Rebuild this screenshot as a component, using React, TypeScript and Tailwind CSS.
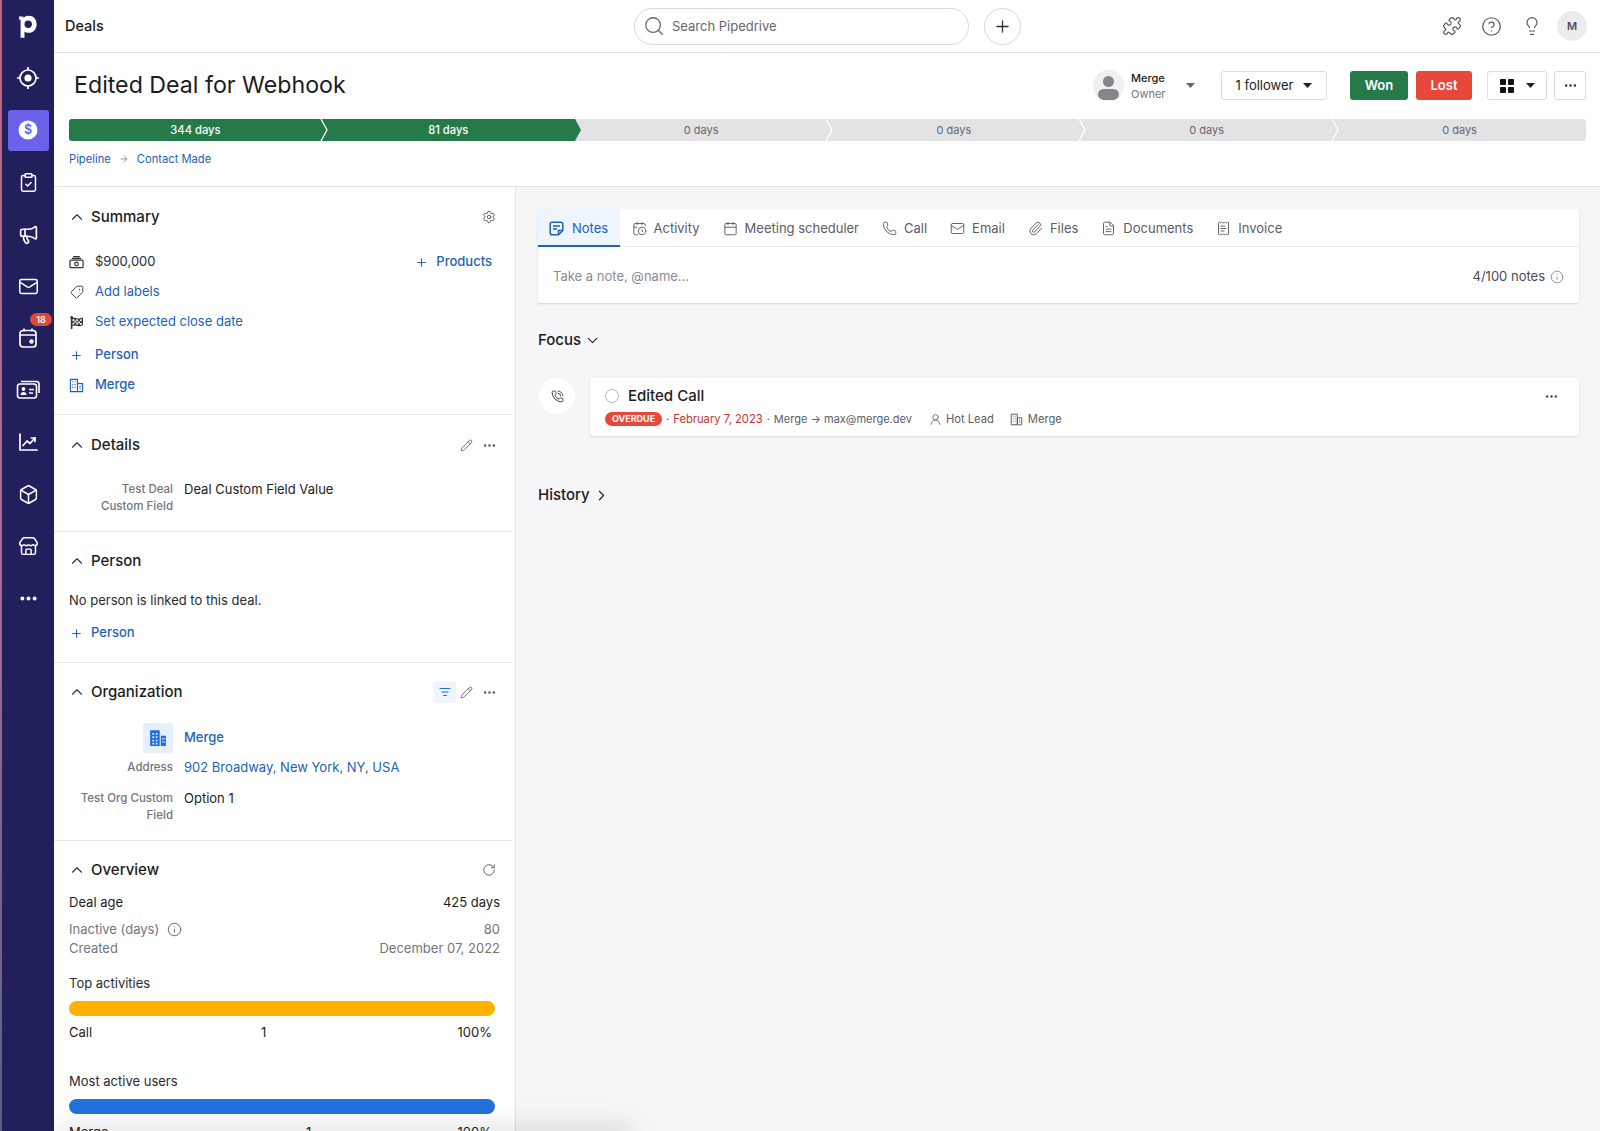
import React from "react";
import {
  ArrowRight,
  Box,
  Calendar,
  CalendarClock,
  ChevronDown,
  ChevronRight,
  ChevronUp,
  CircleHelp,
  ClipboardCheck,
  Ellipsis,
  FileText,
  Info,
  Lightbulb,
  ListFilter,
  Mail,
  Megaphone,
  Paperclip,
  Pencil,
  Phone,
  PhoneCall,
  Plus,
  Puzzle,
  ReceiptText,
  RotateCw,
  Search,
  Settings,
  Store,
  Tag,
  UserRound,
} from "lucide-react";
import { FaFlagCheckered } from "react-icons/fa";

const Logo = () => (
  <svg width="20" height="26" viewBox="0 0 20 26" fill="none">
    <path
      d="M1 3.500h4.200l.4 1.600C6.700 3.600 8.400 2.800 10.600 2.800c4.700 0 8 3.400 8 8.400s-3.300 8.600-8 8.600c-1.700 0-3.100-.5-4.100-1.400v6.400H2.600V7.400c0-.6-.3-.8-.8-.8H1V3.500z"
      fill="#fff"
    />
    <circle cx="10.200" cy="11.200" r="3.700" fill="#211f5c" />
  </svg>
);

const Target = () => (
  <svg width="24" height="24" viewBox="0 0 24 24" fill="none" stroke="#fff" strokeWidth="1.700">
    <circle cx="12" cy="12" r="8" />
    <circle cx="12" cy="12" r="3.600" fill="#fff" stroke="none" />
    <path d="M12 1v3M12 20v3M1 12h3M20 12h3" />
  </svg>
);

const DollarCircle = () => (
  <svg width="20" height="20" viewBox="0 0 20 20">
    <circle cx="10" cy="10" r="9.500" fill="#fff" />
    <text x="10" y="14.400" textAnchor="middle" fontSize="12.500" fontWeight="600" fill="#6a62e8" fontFamily="Inter, sans-serif">
      $
    </text>
  </svg>
);

const CalendarDot = () => (
  <svg width="20" height="22" viewBox="0 0 20 22" fill="none" stroke="#fff" strokeWidth="1.700">
    <rect x="2" y="3.500" width="16" height="16.500" rx="3" />
    <path d="M2 8h16M6 1.500v3M14 1.500v3" />
    <circle cx="13.500" cy="14.500" r="2.200" fill="#fff" stroke="none" />
  </svg>
);

const ContactsIcon = () => (
  <svg width="24" height="22" viewBox="0 0 24 22" fill="none" stroke="#fff" strokeWidth="1.600">
    <rect x="1.500" y="5" width="19" height="14" rx="2.500" />
    <path d="M5 2.500h15.500a2.500 2.500 0 0 1 2.500 2.500v9" />
    <circle cx="7.500" cy="10" r="1.900" fill="#fff" stroke="none" />
    <path d="M4.500 16c0-2 1.300-3 3-3s3 1 3 3z" fill="#fff" stroke="none" />
    <path d="M13 10.500h5M13 14h4" />
  </svg>
);

const ChartIcon = () => (
  <svg width="21" height="20" viewBox="0 0 21 20" fill="none" stroke="#fff" strokeWidth="1.700" strokeLinecap="round" strokeLinejoin="round">
    <path d="M2 2v16h17" />
    <path d="M5 13.500l4-4.500 3 2.500 5-5.500" />
    <path d="M13.500 6H17v3.500" />
  </svg>
);

const GridIcon = () => (
  <svg width="14" height="14" viewBox="0 0 14 14" fill="#111">
    <rect width="6" height="6" rx="1" />
    <rect x="8" width="6" height="6" rx="1" />
    <rect y="8" width="6" height="6" rx="1" />
    <rect x="8" y="8" width="6" height="6" rx="1" />
  </svg>
);

const MoneyIcon = () => (
  <svg width="16" height="14" viewBox="0 0 16 14" fill="none" stroke="#333" strokeWidth="1.300">
    <rect x="1" y="5" width="14" height="8" rx="1" />
    <circle cx="8" cy="9" r="1.900" />
    <path d="M3 3.200h10M4.500 1.200h7" />
  </svg>
);

const NoteIcon = () => (
  <svg width="15" height="15" viewBox="0 0 15 15" fill="none" stroke="#1d62b5" strokeWidth="1.500">
    <path d="M3 1.200h9A1.800 1.800 0 0 1 13.800 3v6.500l-4.300 4.300H3A1.800 1.800 0 0 1 1.200 12V3A1.800 1.800 0 0 1 3 1.200z" />
    <path d="M4 5h7M4 8h4" />
    <path d="M9.500 13.500V9.500h4" />
  </svg>
);

// office block with a lower wing, used in blue and grey
const BuildingIcon = ({ size = 15, solid = false, stroke = "currentColor" }: { size?: number; solid?: boolean; stroke?: string }) =>
  solid ? (
    <svg width={size} height={size} viewBox="0 0 16 16" fill={stroke}>
      <path d="M1 1h8.500v14H1zM10.500 6H15v9h-4.500z" />
      <path d="M3 3.500h1.500V5H3zM6 3.500h1.500V5H6zM3 6.500h1.500V8H3zM6 6.500h1.500V8H6zM3 9.500h1.500V11H3zM6 9.500h1.500V11H6zM3 12.300h1.500v1.500H3zM6 12.300h1.500v1.500H6zM11.700 8.200H14v1.100h-2.300zM11.700 11h2.300v1.100h-2.300z" fill="#e6f0fc" />
    </svg>
  ) : (
    <svg width={size} height={size} viewBox="0 0 16 16" fill="none" stroke={stroke} strokeWidth="1.200">
      <path d="M1.500 1.500h7.500v13H1.500zM9 6h5.500v8.500H9z" />
      <path d="M3.500 4h1M6 4h1M3.500 7h1M6 7h1M3.500 10h1M6 10h1M11 9h1.500M11 11.500h1.500" />
    </svg>
  );

const Caret = ({ color = "#222" }: { color?: string }) => (
  <svg width="9" height="5" viewBox="0 0 9 5" fill={color}>
    <path d="M0 0h9L4.500 5z" />
  </svg>
);

const navItems = [
  <Target />,
  <DollarCircle />,
  <ClipboardCheck size={21} strokeWidth={1.7} />,
  <Megaphone size={21} strokeWidth={1.9} />,
  <Mail size={21} strokeWidth={1.7} />,
  <CalendarDot />,
  <ContactsIcon />,
  <ChartIcon />,
  <Box size={21} strokeWidth={1.7} />,
  <Store size={21} strokeWidth={1.7} />,
  <Ellipsis size={21} strokeWidth={2.6} />,
];

const Sidebar = () => (
  <div className="w-[54px] h-full shrink-0 flex bg-[#211f5c]">
    <div className="w-[2px] h-full bg-gradient-to-b from-[#c2607c] via-[#a66a92] to-[#56607e]" />
    <div className="flex-1 flex flex-col items-center text-white">
      <div className="h-[52px] flex items-center justify-center">
        <Logo />
      </div>
      {navItems.map((icon, i) => (
        <div key={i} className="relative h-[52px] w-full flex items-center justify-center">
          {i === 1 ? (
            <div className="w-[41px] h-[41px] rounded-[3px] bg-[#6a62e8] flex items-center justify-center">{icon}</div>
          ) : (
            icon
          )}
          {i === 5 && (
            <span className="absolute left-[28px] top-[1px] h-[13px] w-[22px] rounded-full bg-[#e2483a] text-white text-[9px] font-semibold leading-[13px] text-center">
              18
            </span>
          )}
        </div>
      ))}
    </div>
  </div>
);

const TopBar = () => (
  <div className="h-[53px] shrink-0 border-b border-[#e3e3e6] flex items-center pl-[11px] pr-[13px]">
    <div className="w-[569px] text-[14.500px] font-medium text-[#1c1c21]">Deals</div>
    <div className="h-[37px] w-[335px] rounded-full border border-[#d9d6dd] flex items-center pl-[8px] text-[#66666e]">
      <Search size={22} strokeWidth={1.4} />
      <span className="ml-[7px] mt-[1px] text-[13px]">Search Pipedrive</span>
    </div>
    <div className="ml-[15px] h-[37px] w-[37px] rounded-full border border-[#d9d6dd] flex items-center justify-center text-[#2c2c33]">
      <Plus size={19} strokeWidth={1.6} />
    </div>
    <div className="ml-auto flex items-center text-[#55555d]">
      <Puzzle size={20} strokeWidth={1.4} />
      <CircleHelp size={21} strokeWidth={1.4} className="ml-[19px]" />
      <Lightbulb size={20} strokeWidth={1.4} className="ml-[20px]" />
      <div className="ml-[15px] h-[30px] w-[30px] rounded-full bg-[#ececef] flex items-center justify-center text-[11px] font-semibold text-[#4b4b53]">
        M
      </div>
    </div>
  </div>
);

const stages = [
  { label: "344 days", done: true },
  { label: "81 days", done: true },
  { label: "0 days", done: false },
  { label: "0 days", done: false },
  { label: "0 days", done: false },
  { label: "0 days", done: false },
];

const PipelineBar = () => (
  <div className="flex h-[22px]">
    {stages.map((s, i) => (
      <div
        key={i}
        className={
          "relative flex-1 flex items-center justify-center " +
          (s.done ? "bg-[#267a4a] text-white font-medium text-[11.200px] pt-[1px] " : "bg-[#e3e2e5] text-[#66666e] text-[11px] ") +
          (i === 0 ? "rounded-l-[3px] " : "") +
          (i === 5 ? "rounded-r-[3px]" : "")
        }
      >
        {s.label}
        {i === 1 && (
          <svg width="6" height="22" viewBox="0 0 6 22" className="absolute left-full top-0 z-10">
            <path d="M0 0l6 11-6 11z" fill="#267a4a" />
          </svg>
        )}
        {i < 5 && i !== 1 && (
          <svg width="8" height="22" viewBox="0 0 8 22" fill="none" className="absolute right-[-6px] top-0 z-10">
            <path d="M1 0l6 11-6 11" stroke="#fff" strokeWidth="1.300" />
          </svg>
        )}
      </div>
    ))}
  </div>
);

const DealHeader = () => (
  <div className="h-[134px] shrink-0 border-b border-[#e3e3e6] pl-[15px] pr-[14px] pt-[18px]">
    <div className="flex items-center h-[29px]">
      <h1 className="ml-[5px] text-[23.200px] font-normal text-[#1b1b20] leading-none">Edited Deal for Webhook</h1>
      <div className="ml-auto flex items-center">
        <div className="relative w-[31px] h-[31px] rounded-full bg-[#f0f0f2] overflow-hidden">
          <div className="absolute left-[10px] top-[6px] w-[11px] h-[11px] rounded-full bg-[#85858c]" />
          <div className="absolute left-[5px] top-[19px] w-[21px] h-[11px] rounded-full bg-[#85858c]" />
        </div>
        <div className="ml-[7px] w-[55px] flex flex-col leading-[16px]">
          <span className="text-[11px] font-medium text-[#1c1c21]">Merge</span>
          <span className="text-[11px] text-[#74747c]">Owner</span>
        </div>
        <Caret color="#66666e" />
        <button className="ml-[26px] h-[29px] w-[106px] rounded-[3px] border border-[#dcdce0] flex items-center justify-center gap-[10px] text-[13px] text-[#1c1c21]">
          1 follower
          <Caret />
        </button>
        <button className="ml-[23px] h-[29px] w-[58px] rounded-[3px] bg-[#267a4a] text-white text-[13px] font-semibold">Won</button>
        <button className="ml-[8px] h-[29px] w-[56px] rounded-[3px] bg-[#e8483a] text-white text-[13px] font-semibold">Lost</button>
        <button className="ml-[15px] h-[29px] w-[60px] rounded-[3px] border border-[#dcdce0] flex items-center justify-center gap-[12px]">
          <GridIcon />
          <Caret />
        </button>
        <button className="ml-[7px] h-[29px] w-[32px] rounded-[3px] border border-[#dcdce0] flex items-center justify-center text-[#333]">
          <Ellipsis size={15} />
        </button>
      </div>
    </div>
    <div className="mt-[19px]">
      <PipelineBar />
    </div>
    <div className="mt-[9px] h-[18px] flex items-center text-[11.200px] text-[#1d62b5]">
      <span>Pipeline</span>
      <ArrowRight size={10} className="mx-[8px] text-[#8a8a92]" />
      <span>Contact Made</span>
    </div>
  </div>
);

const SectionTitle = ({ title, children }: { title: string; children?: React.ReactNode }) => (
  <div className="h-[22px] flex items-center">
    <ChevronUp size={18} strokeWidth={1.5} className="text-[#333] -ml-[1px]" />
    <h2 className="ml-[5px] text-[15px] font-medium text-[#1c1c21]">{title}</h2>
    <div className="ml-auto flex items-center text-[#55555d]">{children}</div>
  </div>
);

const IconRow = ({ icon, children, className = "" }: { icon: React.ReactNode; children: React.ReactNode; className?: string }) => (
  <div className={"h-[30px] flex items-center text-[13px] " + className}>
    <span className="w-[15px] flex justify-center">{icon}</span>
    <span className="ml-[11px] flex-1 flex items-center">{children}</span>
  </div>
);

const LeftPanel = () => (
  <div className="w-[462px] h-full shrink-0 border-r border-[#e3e3e6] overflow-hidden">
    <section className="mr-[3px] border-b border-[#e9e9ec] pl-[15px] pr-[19px] pt-[19px] pb-[14px]">
      <SectionTitle title="Summary">
        <Settings size={14} strokeWidth={1.6} className="mr-[-3px]" />
      </SectionTitle>
      <div className="mt-[19px]">
        <IconRow icon={<MoneyIcon />}>
          <span className="text-[#2a2a30]">$900,000</span>
          <span className="ml-auto mr-[1px] flex items-center font-medium text-[#1d62b5]">
            <Plus size={13} className="mr-[8px]" />
            Products
          </span>
        </IconRow>
        <IconRow icon={<Tag size={14} strokeWidth={1.6} className="text-[#333] rotate-90" />}>
          <span className="text-[#1d62b5]">Add labels</span>
        </IconRow>
        <IconRow icon={<FaFlagCheckered size={13} className="text-[#333]" />}>
          <span className="text-[#1d62b5]">Set expected close date</span>
        </IconRow>
        <IconRow className="mt-[3px]" icon={<Plus size={13} className="text-[#1d62b5]" />}>
          <span className="font-medium text-[#1d62b5]">Person</span>
        </IconRow>
        <IconRow icon={<BuildingIcon size={15} stroke="#1d62b5" />}>
          <span className="font-medium text-[#1d62b5]">Merge</span>
        </IconRow>
      </div>
    </section>

    <section className="mr-[3px] border-b border-[#e9e9ec] pl-[15px] pr-[19px] pt-[19px] pb-[16px]">
      <SectionTitle title="Details">
        <Pencil size={13} strokeWidth={1.5} className="mr-[9px]" />
        <Ellipsis size={15} className="mr-[-4px]" />
      </SectionTitle>
      <div className="mt-[25px] flex">
        <div className="w-[104px] text-right text-[11.500px] font-medium leading-[17px] text-[#74747c]">
          Test Deal
          <br />
          Custom Field
        </div>
        <div className="ml-[11px] text-[13px] leading-[17px] text-[#1c1c21]">Deal Custom Field Value</div>
      </div>
    </section>

    <section className="mr-[3px] border-b border-[#e9e9ec] pl-[15px] pr-[19px] pt-[18px] pb-[19px]">
      <SectionTitle title="Person" />
      <div className="mt-[19px] h-[20px] flex items-center text-[13px] text-[#2a2a30]">No person is linked to this deal.</div>
      <div className="mt-[12px] h-[20px] flex items-center text-[13px] font-medium text-[#1d62b5]">
        <Plus size={13} className="ml-[1px] mr-[8px]" />
        Person
      </div>
    </section>

    <section className="mr-[3px] border-b border-[#e9e9ec] pl-[15px] pr-[19px] pt-[18px] pb-[16px]">
      <SectionTitle title="Organization">
        <span className="w-[22px] h-[22px] rounded-[3px] bg-[#eef4fd] flex items-center justify-center text-[#1f6fdc]">
          <ListFilter size={12} strokeWidth={2.2} />
        </span>
        <Pencil size={13} strokeWidth={1.5} className="ml-[4px] mr-[9px]" />
        <Ellipsis size={15} className="mr-[-4px]" />
      </SectionTitle>
      <div className="mt-[20px] flex items-center">
        <div className="ml-[74px] w-[30px] h-[30px] rounded-[3px] bg-[#e6f0fc] flex items-center justify-center">
          <BuildingIcon size={18} solid stroke="#1f6fdc" />
        </div>
        <div className="ml-[11px] text-[13px] font-medium text-[#1d62b5]">Merge</div>
      </div>
      <div className="mt-[6px] flex items-center h-[17px]">
        <div className="w-[104px] text-right text-[11.500px] font-medium text-[#74747c]">Address</div>
        <div className="ml-[11px] text-[13px] text-[#1d62b5]">902 Broadway, New York, NY, USA</div>
      </div>
      <div className="mt-[14px] flex">
        <div className="w-[104px] text-right text-[11.500px] font-medium leading-[17px] text-[#74747c]">
          Test Org Custom
          <br />
          Field
        </div>
        <div className="ml-[11px] text-[13px] leading-[17px] text-[#1c1c21]">Option 1</div>
      </div>
    </section>

    <section className="pl-[15px] pr-[15px] pt-[18px]">
      <div className="pr-[4px]">
        <SectionTitle title="Overview">
          <RotateCw size={14} strokeWidth={1.5} />
        </SectionTitle>
      </div>
      <div className="mt-[12px] h-[20px] flex items-center justify-between text-[13px] text-[#1c1c21]">
        <span>Deal age</span>
        <span>425 days</span>
      </div>
      <div className="mt-[7px] h-[19px] flex items-center justify-between text-[13px] text-[#74747c]">
        <span className="flex items-center">
          Inactive (days)
          <Info size={15} strokeWidth={1.4} className="ml-[8px] text-[#55555d]" />
        </span>
        <span>80</span>
      </div>
      <div className="h-[19px] flex items-center justify-between text-[13px] text-[#74747c]">
        <span>Created</span>
        <span>December 07, 2022</span>
      </div>
      <div className="mt-[16px] h-[20px] flex items-center text-[13px] text-[#2a2a30]">Top activities</div>
      <div className="mt-[7px] h-[15px] w-[426px] rounded-full bg-[#ffb300]" />
      <div className="mt-[7px] h-[20px] w-[423px] grid grid-cols-[192px_1fr_auto] items-center text-[13px] text-[#1c1c21]">
        <span>Call</span>
        <span>1</span>
        <span>100%</span>
      </div>
      <div className="mt-[29px] h-[20px] flex items-center text-[13px] text-[#2a2a30]">Most active users</div>
      <div className="mt-[7px] h-[15px] w-[426px] rounded-full bg-[#2470dc]" />
      <div className="mt-[9px] h-[20px] w-[423px] grid grid-cols-[237px_1fr_auto] items-center text-[13px] text-[#1c1c21]">
        <span>Merge</span>
        <span>1</span>
        <span>100%</span>
      </div>
    </section>
  </div>
);

const tabs = [
  { label: "Activity", icon: <CalendarClock size={15} strokeWidth={1.5} /> },
  { label: "Meeting scheduler", icon: <Calendar size={15} strokeWidth={1.5} /> },
  { label: "Call", icon: <Phone size={15} strokeWidth={1.5} /> },
  { label: "Email", icon: <Mail size={15} strokeWidth={1.5} /> },
  { label: "Files", icon: <Paperclip size={15} strokeWidth={1.5} /> },
  { label: "Documents", icon: <FileText size={15} strokeWidth={1.5} /> },
  { label: "Invoice", icon: <ReceiptText size={15} strokeWidth={1.5} /> },
];

const NotesCard = () => (
  <div className="h-[94px] bg-white rounded-[2px] shadow-[0_1px_2px_rgba(0,0,0,0.14)]">
    <div className="h-[38px] border-b border-[#e9e9ec] flex">
      <div className="w-[82px] h-[38px] bg-[#eef5fd] border-b-2 border-[#1d62b5] flex items-center pl-[11px] pt-[3px] gap-[8px] text-[13px] text-[#1d62b5]">
        <NoteIcon />
        Notes
      </div>
      <div className="flex">
        {tabs.map((t) => (
          <div key={t.label} className="flex items-center px-[11.500px] pt-[2px] gap-[7px] text-[13px] text-[#5c5c64]">
            {t.icon}
            {t.label}
          </div>
        ))}
      </div>
    </div>
    <div className="h-[56px] flex items-center justify-between pl-[15px] pr-[15px] pt-[3px] text-[13px]">
      <span className="text-[#8b8b93]">Take a note, @name...</span>
      <span className="flex items-center text-[#4b4b53]">
        4/100 notes
        <Info size={14} strokeWidth={1.3} className="ml-[5px] text-[#74747c]" />
      </span>
    </div>
  </div>
);

const FocusCard = () => (
  <div className="flex items-start">
    <div className="ml-[1px] w-[36px] h-[36px] rounded-full bg-white flex items-center justify-center text-[#44444c]">
      <PhoneCall size={13} strokeWidth={1.8} />
    </div>
    <div className="ml-[15px] flex-1 h-[58px] bg-white rounded-[3px] shadow-[0_1px_2px_rgba(0,0,0,0.14)] pl-[15px] pr-[20px] pt-[8px]">
      <div className="flex items-center h-[20px]">
        <span className="w-[14px] h-[14px] rounded-full border-[1.5px] border-[#b5b5bb]" />
        <span className="ml-[9px] text-[15px] font-medium text-[#1c1c21]">Edited Call</span>
        <Ellipsis size={15} className="ml-auto text-[#44444c]" />
      </div>
      <div className="mt-[5px] flex items-center h-[16px] text-[11.200px] text-[#5c5c64]">
        <span className="h-[14px] w-[57px] rounded-full bg-[#e8483a] text-white text-[9px] font-bold leading-[14px] text-center">OVERDUE</span>
        <span className="mx-[4px]">·</span>
        <span className="text-[#c4352b]">February 7, 2023</span>
        <span className="mx-[4px]">·</span>
        <span className="text-[11px]">Merge → max@merge.dev</span>
        <UserRound size={13} strokeWidth={1.5} className="ml-[17px]" />
        <span className="ml-[4px]">Hot Lead</span>
        <span className="ml-[16px]">
          <BuildingIcon size={13} />
        </span>
        <span className="ml-[5px]">Merge</span>
      </div>
    </div>
  </div>
);

const RightPanel = () => (
  <div className="flex-1 h-full bg-[#f6f5f8] pl-[22px] pr-[21px] pt-[22px]">
    <NotesCard />
    <div className="mt-[27px] h-[20px] flex items-center text-[15px] font-medium text-[#1c1c21]">
      Focus
      <ChevronDown size={17} strokeWidth={1.5} className="ml-[3px]" />
    </div>
    <div className="mt-[28px]">
      <FocusCard />
    </div>
    <div className="mt-[49px] h-[20px] flex items-center text-[15px] font-medium text-[#1c1c21]">
      History
      <ChevronRight size={17} strokeWidth={1.5} className="ml-[3px]" />
    </div>
  </div>
);

export default function App() {
  return (
    <div className="relative w-[1600px] h-[1131px] flex overflow-hidden bg-white font-['Inter',sans-serif]">
      <Sidebar />
      <div className="flex-1 h-full flex flex-col min-w-0">
        <TopBar />
        <DealHeader />
        <div className="flex-1 flex min-h-0">
          <LeftPanel />
          <RightPanel />
        </div>
      </div>
      {/* soft shadow the video capture leaves along the bottom edge */}
      <div className="absolute left-[60px] bottom-[-12px] w-[570px] h-[16px] bg-black/15 blur-md" />
    </div>
  );
}
